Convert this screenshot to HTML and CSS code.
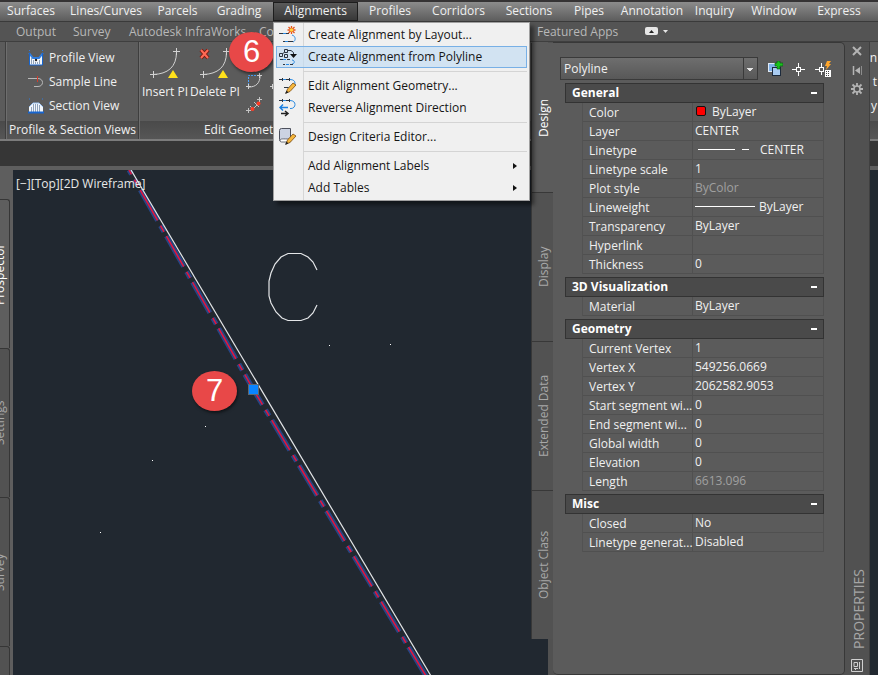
FILE: index.html
```html
<!DOCTYPE html>
<html lang="en">
<head>
<meta charset="utf-8">
<title>Civil 3D</title>
<link rel="stylesheet" href="styles.css">
</head>
<body>
<nav class="menubar" aria-label="Menu bar">
  <button>Surfaces</button>
  <button>Lines/Curves</button>
  <button>Parcels</button>
  <button>Grading</button>
  <div class="menu-host">
    <button class="open" aria-expanded="true">Alignments</button>
    <div class="dropdown" role="menu">
      <button role="menuitem"><svg viewBox="0 0 18 18"><path class="dk" d="M0 7.500h4M7 7.500h3"/><path class="bl" d="M4 7.500h3M13 9c4 1 4 6 1 7"/><path class="dk" d="M4 15.500h2M9 15.500h5"/><path class="bl" d="M6 15.500h3"/><path d="M12.500 0v8M8.500 4h8M9.500 1l6 6M15.500 1l-6 6" stroke="#e8541b" stroke-width="1.300" fill="none"/><circle cx="12.500" cy="4" r="1.800" fill="#ffd23c"/></svg><span>Create Alignment by Layout...</span></button>
      <button role="menuitem" class="hot"><svg viewBox="0 0 18 18"><g class="dk"><path d="M.5 5.500h3v3h-3zM5.500 1.500h3v3h-3zM5.500 6.500h3v3h-3z"/><path d="M3.500 6l2-2M9 2.500h3l2.500 2v3"/></g><path d="M11 6h7l-3.500 4z" fill="#111"/><path class="bl" d="M4 11.500h3M13 12c3 0 3 4 0 4M7 16.500h3"/><path class="dk" d="M1 11.500h3M8 11.500h3M4 16.500h2M11 16.500h3"/></svg><span>Create Alignment from Polyline</span></button>
      <hr>
      <button role="menuitem"><svg viewBox="0 0 18 18"><path class="dk" d="M0 2.500h3M3.500 1v3M7 2.500h3M10.500 1v3"/><path class="bl" d="M4 2.500h3M11 2.500c7 0 6 7 1 8H9"/><path class="dk" d="M5 10.500h4"/><path d="M7 16l1.500-4L14 6l3 2-6 6.500z" fill="#f6b73c" stroke="#7a4a12" stroke-width=".8"/><path d="M6 17l1.500-3.500 2 2z" fill="#222"/></svg><span>Edit Alignment Geometry...</span></button>
      <button role="menuitem"><svg viewBox="0 0 18 18"><path class="dk" d="M0 1.500h3M3.500 0v3M7 1.500h3M10.500 0v3"/><path class="bl" d="M4 1.500h3M11 1.500c7 0 6 8 1 8h-1"/><path d="M9 8.500H1M4 5.500l-3 3 3 3" fill="none" stroke="#1b7fe0" stroke-width="1.500"/><path d="M2 14.500h6M6 12l3 2.500L6 17" fill="none" stroke="#222" stroke-width="1.500"/></svg><span>Reverse Alignment Direction</span></button>
      <hr>
      <button role="menuitem"><svg viewBox="0 0 18 18"><path d="M2.500.500h9v13h-9a2 2 0 0 1-2-2v-9a2 2 0 0 1 2-2z" fill="#ccd3e2" stroke="#4c505c"/><path d="M1 12c1-1.500 2-1 10.500-1v3H3c-1 0-2 0-2-2z" fill="#fff" stroke="#4c505c" stroke-width=".8"/><path d="M7 16l1.500-4L14 6l3 2-6 6.500z" fill="#f6b73c" stroke="#7a4a12" stroke-width=".8"/><path d="M6 17l1.500-3.500 2 2z" fill="#222"/></svg><span>Design Criteria Editor...</span></button>
      <hr>
      <button role="menuitem"><i></i><span>Add Alignment Labels</span><b></b></button>
      <button role="menuitem"><i></i><span>Add Tables</span><b></b></button>
    </div>
  </div>
  <button>Profiles</button>
  <button>Corridors</button>
  <button>Sections</button>
  <button>Pipes</button>
  <button>Annotation</button>
  <button>Inquiry</button>
  <button>Window</button>
  <button>Express</button>
</nav>

<nav class="tabs" aria-label="Ribbon tabs">
  <a href="#">Output</a>
  <a href="#">Survey</a>
  <a href="#">Autodesk InfraWorks</a>
  <a href="#">Co</a>
  <a href="#">Featured Apps</a>
  <button class="minimize" aria-label="Minimize ribbon"><svg viewBox="0 0 24 9"><rect width="13" height="8" rx="2" fill="#e6e6e6"/><path d="M4 6l2.500-3L9 6z" fill="#222"/><path d="M18 3h5l-2.500 3z" fill="#e6e6e6"/></svg></button>
</nav>

<section class="ribbon">
  <div class="panel sliver"><div class="tools"></div><div class="title"></div></div>
  <div class="panel views">
    <div class="tools">
      <button><svg viewBox="0 0 16 16"><path d="M1 3v12h14V3l-4 5H5z" fill="#f2f6fb"/><path d="M1 3l4 5h6l4-5" fill="none" stroke="#2f7de0" stroke-width="2"/><path d="M1.500 3v12h13V3" fill="none" stroke="#1765cf"/><path d="M3.500 8v6M5.500 10v4M7.500 12v2M9.500 12v2M11.500 10v4" stroke="#8fa3bb"/><circle cx="8" cy="10" r="1.200" fill="#222"/><path d="M1 .500h1M14 .500h1" stroke="#2f7de0"/></svg>Profile View</button>
      <button><svg viewBox="0 0 16 16"><path d="M0 4.500h10c6 0 6 8 0 8H6" fill="none" stroke="#b9b9b9"/><path d="M9.500 2v6" stroke="#d33b2c"/></svg>Sample Line</button>
      <button><svg viewBox="0 0 16 16"><path d="M1 14V9l4-4h6l4 4v5z" fill="#f2f6fb"/><path d="M1 9l4-4h6l4 4" fill="none" stroke="#9cc4f3"/><path d="M3.500 9v5M5.500 6v8M7.500 6v8M9.500 6v8M11.500 7v7" stroke="#8fa3bb"/><path d="M0 14.500h16" stroke="#1765cf" stroke-width="2"/><path d="M1 1h1M14 1h1" stroke="#2f7de0"/></svg>Section View</button>
    </div>
    <div class="title">Profile &amp; Section Views</div>
  </div>
  <div class="panel edit">
    <div class="tools">
      <button class="big"><svg viewBox="0 0 32 32"><g fill="none" stroke="#d2d2d2"><path d="M4 26.500C19 26 27.500 19 27.500 4M1 26.500h7M4.500 23v7M24 3.500h7M27.500 0v7"/></g><path d="M24 22l5 8H19z" fill="#ffe11a"/></svg>Insert PI</button>
      <button class="big"><svg viewBox="0 0 32 32"><g fill="none" stroke="#d2d2d2"><path d="M4 26.500C19 26 27.500 19 27.500 4M1 26.500h7M4.500 23v7M24 3.500h7M27.500 0v7"/></g><path d="M24 22l5 8H19z" fill="#ffe11a"/><path d="M2 2l7 8M9 2l-7 8" stroke="#7a1a12" stroke-width="4"/><path d="M2 2l7 8M9 2l-7 8" stroke="#ff6a55" stroke-width="2"/></svg>Delete PI</button>
      <div class="small">
        <button aria-label="Curve"><svg viewBox="0 0 16 16"><path d="M2.500 12V2.500H11" fill="none" stroke="#4da3ff" stroke-dasharray="2 1"/><path d="M3 14c7 0 11-4 11-11M0 13.500h5M2.500 11v5M11 2.500h5M13.500 0v5" fill="none" stroke="#d2d2d2"/></svg></button>
        <button aria-label="Tangent"><svg viewBox="0 0 16 16"><path d="M0 13.500h5M2.500 11v5M11 2.500h5M13.500 0v5M4 9l4 4M8 5l5 5M7 12l5-5" fill="none" stroke="#c4c4c4"/><circle cx="6.500" cy="12" r="2" fill="#ff3b24"/><circle cx="12.500" cy="6.500" r="2" fill="#ff3b24"/></svg></button>
      </div>
      <div class="small">
        <button aria-label="Reverse curve"><svg viewBox="0 0 16 16"><path d="M0 13.500h5M2.500 11v5" fill="none" stroke="#d2d2d2"/></svg></button>
      </div>
    </div>
    <div class="title">Edit Geometry</div>
  </div>
  <div class="panel rest">
    <div class="tools"><span>n</span><span>t</span><span>y</span></div>
    <div class="title"></div>
  </div>
</section>
<div class="dock"></div>

<main class="work">
  <div class="toolspace">
    <button class="on">Prospector</button>
    <button>Settings</button>
    <button>Survey</button>
    <button aria-label="Toolbox"></button>
  </div>
  <div class="canvas">
    <svg class="drawing" aria-label="Drawing">
      <g transform="translate(-13 -170)">
        <g fill="none">
          <path class="halo" d="M129 170L253 389L426 676"/>
          <path class="center" d="M129 170L253 389L426 676"/>
          <path d="M131 170L431 676" stroke="#e4e6e8" stroke-width="1.200"/>
          <path d="M317 270l-4-8-5-5-7-3.500h-13l-7 3.500-6 7-4 9-2 8v15l2 7 5 9 6 6 6 2.500h13l7-2.500 5-5 4-8" stroke="#e4e6e8" stroke-width="1.200"/>
        </g>
        <path d="M329 345h1v1h-1zM390 344h1v1h-1zM205 426h1v1h-1zM152 460h1v1h-1zM100 532h1v1h-1z" fill="#fff"/>
        <rect x="248.500" y="384.500" width="10" height="10" fill="#0a84ff" stroke="#5f6870"/>
      </g>
    </svg>
    <div class="view-label">[−][Top][2D Wireframe]</div>
    <div class="callout seven">7</div>
  </div>
</main>
<div class="callout six">6</div>

<aside class="palette">
  <div class="side-tabs">
    <button class="on">Design</button>
    <button>Display</button>
    <button>Extended Data</button>
    <button>Object Class</button>
  </div>
  <div class="sheet">
    <div class="pick">
      <select aria-label="Object type"><option>Polyline</option></select>
      <button aria-label="Toggle PICKADD"><svg viewBox="0 0 16 16"><rect x="1.500" y="2.500" width="8" height="8" fill="#7fb0e8" stroke="#dfe9f5"/><rect x="5.500" y="6.500" width="8" height="8" fill="#a9ccf2" stroke="#1c2a3c"/><path d="M10 0h3v2h3v3h-3v3h-3V5H8V2h2z" fill="#19c21d" stroke="#0c4d10" stroke-width=".6"/></svg></button>
      <button aria-label="Select objects"><svg viewBox="0 0 16 16"><path d="M7.500 2v4M7.500 11v4M1 8.500h4M10 8.500h4" stroke="#fff"/><rect x="5.500" y="6.500" width="4" height="4" fill="none" stroke="#fff"/></svg></button>
      <button aria-label="Quick select"><svg viewBox="0 0 16 16"><path d="M6.500 2v4M6.500 11v3M0 8.500h4" stroke="#fff"/><rect x="4.500" y="6.500" width="4" height="4" fill="none" stroke="#fff"/><path d="M12 0h4l-2 3h2l-5 6 1-4h-2z" fill="#ffa62b"/><rect x="10" y="9" width="6" height="7" fill="#fff"/><path d="M11 10.500h4M11 12.500h4M11 14.500h4" stroke="#444" stroke-dasharray="1 1"/></svg></button>
    </div>
    <section class="group">
      <button class="head">General<b></b></button>
      <table>
        <tr><th>Color</th><td><i class="swatch"></i>ByLayer</td></tr>
        <tr><th>Layer</th><td>CENTER</td></tr>
        <tr><th>Linetype</th><td><i class="long"></i><i class="short"></i>CENTER</td></tr>
        <tr><th>Linetype scale</th><td>1</td></tr>
        <tr><th>Plot style</th><td class="off">ByColor</td></tr>
        <tr><th>Lineweight</th><td><i class="weight"></i>ByLayer</td></tr>
        <tr><th>Transparency</th><td>ByLayer</td></tr>
        <tr><th>Hyperlink</th><td></td></tr>
        <tr><th>Thickness</th><td>0</td></tr>
      </table>
    </section>
    <section class="group">
      <button class="head">3D Visualization<b></b></button>
      <table>
        <tr><th>Material</th><td>ByLayer</td></tr>
      </table>
    </section>
    <section class="group">
      <button class="head">Geometry<b></b></button>
      <table>
        <tr><th>Current Vertex</th><td>1</td></tr>
        <tr><th>Vertex X</th><td>549256.0669</td></tr>
        <tr><th>Vertex Y</th><td>2062582.9053</td></tr>
        <tr><th>Start segment wi...</th><td>0</td></tr>
        <tr><th>End segment wi...</th><td>0</td></tr>
        <tr><th>Global width</th><td>0</td></tr>
        <tr><th>Elevation</th><td>0</td></tr>
        <tr><th>Length</th><td class="off">6613.096</td></tr>
      </table>
    </section>
    <section class="group">
      <button class="head">Misc<b></b></button>
      <table>
        <tr><th>Closed</th><td>No</td></tr>
        <tr><th>Linetype generat...</th><td>Disabled</td></tr>
      </table>
    </section>
  </div>
  <div class="grip">
    <button aria-label="Close"><svg viewBox="0 0 12 12"><path d="M2 2l8 8M10 2l-8 8" stroke="#b4b4b4" stroke-width="2"/></svg></button>
    <button aria-label="Auto-hide"><svg viewBox="0 0 12 12"><path d="M2.500 2v9" stroke="#b4b4b4" stroke-width="1.500"/><path d="M4 6.500L9 3v7z" fill="#b4b4b4"/><path d="M10.500 2v9" stroke="#8c8c8c"/></svg></button>
    <button aria-label="Palette options"><svg viewBox="0 0 12 12"><path d="M6 0v12M0 6h12M1.500 1.500l9 9M10.500 1.500l-9 9" stroke="#b4b4b4" stroke-width="1.800"/><circle cx="6" cy="6" r="3" fill="#505050" stroke="#b4b4b4" stroke-width="1.500"/></svg></button>
    <span>PROPERTIES</span>
    <svg viewBox="0 0 12 14"><path d="M.5.500h11v12H.5zM3 3.500h3.500v4H3zM3 9.500h4M8.500 3v7M4.500 9v2" fill="none" stroke="#d0d0d0"/></svg>
  </div>
</aside>
</body>
</html>
```
FILE: styles.css
```css
* { box-sizing: border-box; }

body {
  margin: 0;
  height: 100vh;
  overflow: hidden;
  position: relative;
  display: flex;
  flex-direction: column;
  background: #363636;
  color: #f0f0f0;
  font: 12px/16px "Open Sans", "Noto Sans", sans-serif;
}

button {
  margin: 0;
  padding: 0;
  border: 0;
  background: none;
  color: inherit;
  font: inherit;
  white-space: nowrap;
}

a { color: inherit; text-decoration: none; white-space: nowrap; }
svg { display: block; flex: none; }

/* menu bar */
.menubar {
  flex: none;
  height: 22px;
  display: grid;
  grid-template-columns: 62px 88px 55px 68px 85px 64px 73px 68px 52px 74px 51px 68px 62px;
  border-top: 2px solid #353334;
  border-bottom: 1px solid #3a3a3a;
  background: linear-gradient(#8c8c8c, #5c5c5c);
}
.menubar > button, .menu-host > button { height: 19px; padding-bottom: 1px; }
.menu-host { position: relative; z-index: 5; }
.menu-host > .open {
  width: 100%;
  border: 1px solid #1d1d1d;
  background: linear-gradient(#5a5a5a, #383838);
}

.dropdown {
  position: absolute;
  top: 20px;
  left: 0;
  width: 257px;
  padding: 1px 2px;
  display: flex;
  flex-direction: column;
  border: 1px solid #a0a0a0;
  background: linear-gradient(90deg, #f0f0f0 29px, #d6d6d6 29px, #d6d6d6 30px, #f0f0f0 30px);
  box-shadow: 4px 4px 4px rgba(0, 0, 0, .45);
  color: #161616;
}
.dropdown button {
  height: 22px;
  padding: 0 9px 0 2px;
  display: flex;
  align-items: center;
  border: 1px solid transparent;
  text-align: left;
}
.dropdown .hot { border-color: #78b0e6; background: rgba(190, 219, 243, .6); }
.dropdown svg, .dropdown i { width: 18px; height: 18px; flex: none; }
.dropdown span { flex: 1; padding-left: 11px; }
.dropdown b { border: 3px solid transparent; border-left: 4px solid #111; border-right: 0; }
.dropdown hr { width: 224px; height: 1px; margin: 3px 0 3px auto; border: 0; background: #d4d4d4; }
.dk { fill: none; stroke: #2c3440; }
.bl { fill: none; stroke: #2b8ae0; }

/* ribbon */
.tabs {
  flex: none;
  height: 20px;
  display: grid;
  grid-template-columns: 57px 56px 130px 278px 108px auto;
  padding-left: 16px;
  align-items: center;
  background: #545454;
  border-bottom: 1px solid #3f3f3f;
  color: #b8b8b8;
}
.minimize svg { width: 24px; height: 9px; }

.ribbon { flex: none; height: 99px; display: flex; border-bottom: 2px solid #7c7c7c; background: #5b5b5b; }
.panel { display: flex; flex-direction: column; border-right: 1px solid #3e3e3e; }
.panel .tools { flex: 1; }
.panel .title {
  height: 18px;
  line-height: 18px;
  background: linear-gradient(#4a4a4a, #565656);
  text-align: center;
}
.sliver { width: 6px; }
.views { width: 133px; border-left: 1px solid #6e6e6e; }
.views .tools { display: flex; flex-direction: column; padding: 4px 0 0 21px; }
.views button { height: 24px; display: flex; align-items: center; gap: 5px; }
.views svg { width: 16px; height: 16px; }
.edit { width: 210px; border-left: 1px solid #6e6e6e; }
.edit .tools { display: flex; padding: 6px 0 0; }
.big { width: 50px; display: flex; flex-direction: column; align-items: center; gap: 4px; }
.big svg { width: 32px; height: 32px; }
.small { display: flex; flex-direction: column; gap: 8px; padding: 25px 2px 0 6px; }
.small svg { width: 16px; height: 16px; }
.rest { flex: 1; border: 0; }
.rest .tools { display: flex; flex-direction: column; gap: 8px; align-items: flex-end; padding: 8px 1px 0 0; }
.dock { flex: none; height: 25px; background: #363636; }

/* drawing area */
.work { flex: 1; min-height: 0; display: flex; border-top: 4px solid #5e5e5e; background: #5e5e5e; }
.toolspace { width: 10px; margin: 29px 3px 0 0; overflow: hidden; display: flex; flex-direction: column; align-items: flex-end; }
.toolspace button {
  flex: none;
  width: 19px;
  height: 149px;
  writing-mode: vertical-rl;
  transform: rotate(180deg);
  border: 1px solid #363636;
  border-right: 0;
  border-top: 0;
  border-radius: 0 0 0 3px;
  background: #525252;
  color: #a8a8a8;
}
.toolspace .on { background: #5e5e5e; color: #fff; }
.canvas { flex: 1; position: relative; background: #212830; overflow: hidden; }
.drawing { width: 100%; height: 100%; }
.halo { stroke: #274684; stroke-width: 5; stroke-dasharray: 35 6 7 5; stroke-dashoffset: 30; }
.center { stroke: #e8143c; stroke-width: 1.5; stroke-dasharray: 35 6 7 5; stroke-dashoffset: 30; }
.view-label { position: absolute; left: 3px; top: 6px; color: #e8e8e8; }

.callout {
  position: absolute;
  width: 45px;
  height: 40px;
  border-radius: 50%;
  background: #e84848;
  box-shadow: 1px 2px 3px rgba(0, 0, 0, .5);
  color: #fff;
  font: 31px/40px "Liberation Sans", sans-serif;
  text-align: center;
}
.six { left: 229px; top: 32px; }
.seven { left: 179px; top: 201px; }

/* properties palette */
.palette { position: absolute; top: 42px; right: 8px; bottom: 0; width: 339px; display: flex; background: linear-gradient(90deg, transparent 17px, #515151 17px); }
.side-tabs { width: 22px; padding-top: 1px; display: flex; flex-direction: column; }
.side-tabs button {
  height: 149px;
  padding-right: 2px;
  writing-mode: vertical-rl;
  transform: rotate(180deg);
  border: 1px solid #383838;
  border-left: 0;
  border-top: 0;
  background: #525252;
  color: #a8a8a8;
}
.side-tabs .on { border-bottom: 0; background: #5b5b5b; color: #fff; }
.sheet {
  flex: 1;
  padding: 14px 20px 0 12px;
  border: 1px solid #383838;
  border-left: 0;
  border-radius: 0 5px 5px 5px;
  background: #5b5b5b;
}
.pick { display: flex; align-items: center; gap: 8px; margin-left: -5px; margin-right: -7px; height: 23px; }
.pick select {
  flex: 1;
  height: 23px;
  margin-right: 1px;
  padding: 0 3px;
  appearance: none;
  border: 1px solid #3a3a3a;
  border-radius: 0;
  color: #f0f0f0;
  font: inherit;
  background:
    conic-gradient(from 315deg at 50% 100%, #e6e6e6 0, #e6e6e6 90deg, transparent 0) right 3px top 10px / 8px 4px no-repeat,
    linear-gradient(#3a3a3a, #3a3a3a) right 13px top / 1px 100% no-repeat,
    linear-gradient(#6e6e6e, #585858);
}
.pick svg { width: 16px; height: 16px; }
.group { margin-top: 3px; }
.head {
  width: 100%;
  height: 20px;
  padding: 0 6px;
  display: flex;
  align-items: center;
  justify-content: space-between;
  border: 1px solid #333;
  background: #4a4a4a;
  color: #fff;
  font-weight: bold;
}
.head b { width: 6px; height: 2px; background: #fff; }
table { width: calc(100% - 17px); margin-left: 17px; border-collapse: separate; border-spacing: 0; table-layout: fixed; border-left: 1px solid #525252; }
th, td { height: 19px; padding: 0; border-bottom: 1px solid #505050; border-right: 1px solid #505050; text-align: left; font-weight: normal; white-space: nowrap; line-height: 16px; }
th { width: 110px; padding: 1px 0 0 6px; }
td { padding-left: 2px; padding-bottom: 1px; }
.off { color: #a0a0a0; }
td i { display: inline-block; vertical-align: middle; height: 1px; background: #fff; }
td .swatch { width: 10px; height: 10px; margin: 0 6px 2px 1px; border: 1px solid #111; border-radius: 2px; background: #f00; }
td .long { width: 37px; margin: 0 7px 2px 3px; }
td .short { width: 7px; margin: 0 11px 2px 0; }
td .weight { width: 60px; margin: 0 4px 2px 0; }

.grip { width: 25px; padding: 3px 0 2px; display: flex; flex-direction: column; align-items: center; gap: 7px; border-right: 1px solid #404040; }
.grip button svg { width: 12px; height: 12px; }
.grip span { margin: auto 0 3px 4px; writing-mode: vertical-rl; transform: rotate(180deg); font-size: 14px; line-height: 20px; color: #a5a5a5; }
.grip > svg { width: 12px; height: 14px; }
```
